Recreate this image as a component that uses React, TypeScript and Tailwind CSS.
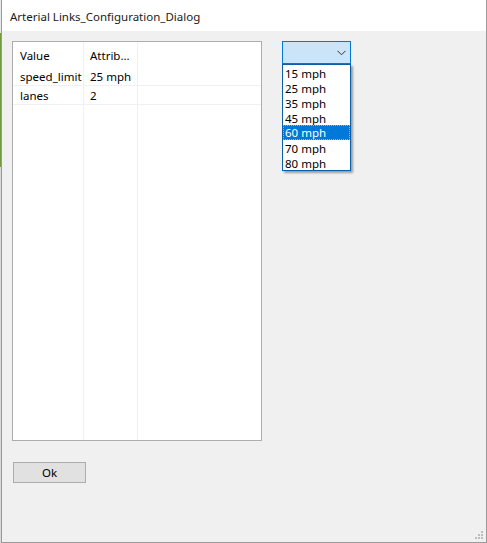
import React from "react";

const font = { fontFamily: '"Segoe UI", "Noto Sans", Arial, sans-serif' };

export default function App() {
  const options = ["15 mph", "25 mph", "35 mph", "45 mph", "60 mph", "70 mph", "80 mph"];
  return (
    <div
      className="w-[487px] h-[543px] flex bg-[#f0f0f0] text-[11.5px] text-black overflow-hidden"
      style={font}
    >
      {/* sliver of background at the left edge */}
      <div className="w-px h-full flex flex-col shrink-0">
        <div className="h-[33px] bg-[#e8e8e8]" />
        <div className="h-[134px] bg-[#6f9b3c]" />
        <div className="flex-1 bg-[#d8d8d8]" />
      </div>

      {/* window */}
      <div className="flex-1 flex flex-col border-l border-r border-b border-[#9a9a9a] relative">
        {/* title bar */}
        <div className="h-[31px] bg-white flex items-center pl-[8px] pt-[2px] shrink-0">
          <span className="text-[11.5px] text-[#1a1a1a] leading-none">Arterial Links_Configuration_Dialog</span>
        </div>

        {/* body */}
        <div className="flex-1 flex flex-col pl-[10px] pt-[10px]">
          <div className="flex items-start">
            {/* grid/table */}
            <div className="w-[250px] h-[400px] bg-white border border-[#adadad] flex relative">
              <div className="w-[71px] h-full border-r border-[#eef0f3] flex flex-col">
                <div className="h-[25px] pl-[7px] pt-[2px] flex items-center">Value</div>
                <div className="h-[19px] pl-[7px] pt-[2px] flex items-center border-b border-[#eef0f3]">speed_limit</div>
                <div className="h-[19px] pl-[7px] pt-[2px] flex items-center border-b border-[#eef0f3]">lanes</div>
              </div>
              <div className="w-[54px] h-full border-r border-[#eef0f3] flex flex-col">
                <div className="h-[25px] pl-[6px] pt-[2px] flex items-center">Attrib...</div>
                <div className="h-[19px] pl-[6px] pt-[2px] flex items-center border-b border-[#eef0f3]">25 mph</div>
                <div className="h-[19px] pl-[6px] pt-[2px] flex items-center border-b border-[#eef0f3]">2</div>
              </div>
              <div className="flex-1 h-full flex flex-col">
                <div className="h-[25px]" />
                <div className="h-[19px] border-b border-[#eef0f3]" />
                <div className="h-[19px] border-b border-[#eef0f3]" />
              </div>
            </div>

            {/* combo box */}
            <div className="ml-[20px] relative">
              <div className="w-[69px] h-[23px] bg-[#cce4f7] border border-[#0078d7] flex items-center justify-end pr-[4px]">
                <svg width="9" height="6" viewBox="0 0 9 6">
                  <path d="M0.5 0.8 L4.5 4.8 L8.5 0.8" fill="none" stroke="#333" strokeWidth="1" />
                </svg>
              </div>
              <div className="absolute left-0 top-[23px] w-[69px] bg-white border border-[#0b5fa8] shadow-[2px_2px_2px_rgba(0,0,0,0.35)] z-10 flex flex-col">
                {options.map((o) => (
                  <div
                    key={o}
                    className={
                      o === "60 mph"
                        ? "h-[15px] pl-[1px] pt-[1px] bg-[#0078d7] text-white border border-dotted border-[#f3a74a] flex items-center overflow-hidden"
                        : "h-[15px] pl-[2px] pt-[2px] flex items-center overflow-hidden"
                    }
                  >
                    <span className="leading-[12px]">{o}</span>
                  </div>
                ))}
              </div>
            </div>
          </div>

          {/* Ok button */}
          <div className="mt-[21px] ml-[1px]">
            <button className="w-[73px] h-[21px] bg-[#e1e1e1] border border-[#adadad] flex items-center justify-center text-[11.5px] text-black">
              Ok
            </button>
          </div>
        </div>

        {/* size grip */}
        <div className="absolute right-[2px] bottom-[2px] w-[10px] h-[10px]">
          <svg width="10" height="10" viewBox="0 0 10 10">
            <rect x="7" y="1" width="2" height="2" fill="#bdbdbd" />
            <rect x="4" y="4" width="2" height="2" fill="#bdbdbd" />
            <rect x="7" y="4" width="2" height="2" fill="#bdbdbd" />
            <rect x="1" y="7" width="2" height="2" fill="#bdbdbd" />
            <rect x="4" y="7" width="2" height="2" fill="#bdbdbd" />
            <rect x="7" y="7" width="2" height="2" fill="#bdbdbd" />
          </svg>
        </div>
      </div>
    </div>
  );
}
